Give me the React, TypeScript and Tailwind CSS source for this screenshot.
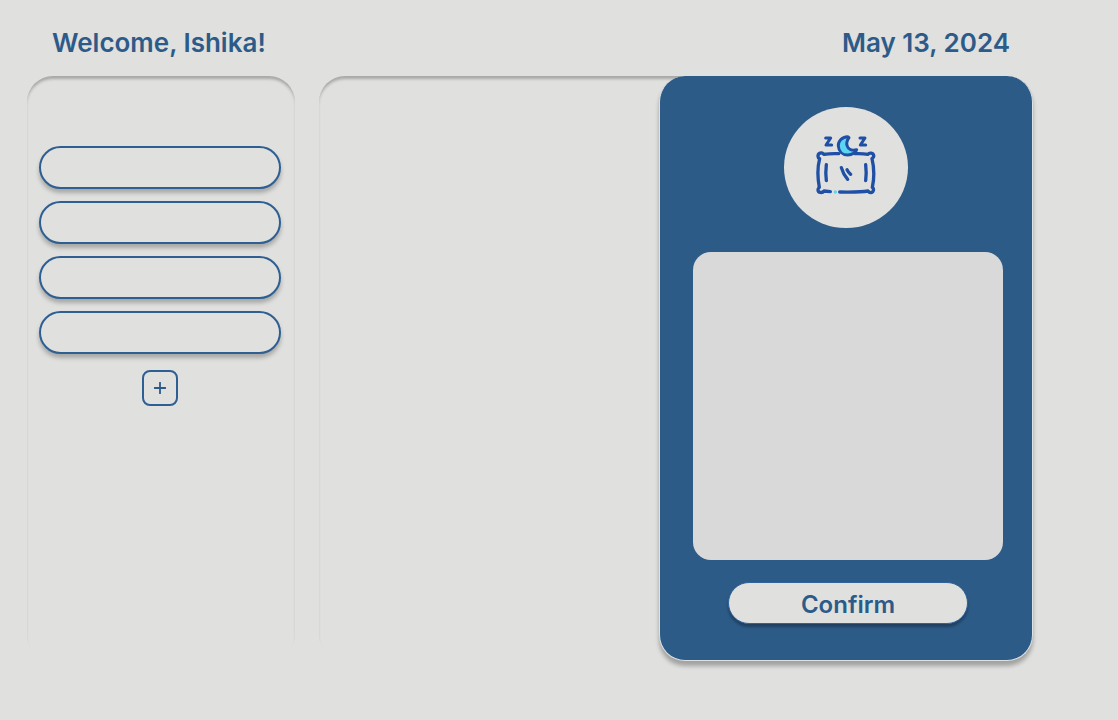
import React from "react";

const habits = ["Habit 1", "Habit 2", "Habit 3", "Habit 4"];

function SleepIcon() {
  return (
    <svg
      className="h-[61px] w-[62px]"
      viewBox="45 42 186 183"
      fill="none"
      stroke="#1f50a6"
      strokeWidth="10"
      strokeLinecap="round"
      strokeLinejoin="round"
      aria-hidden="true"
    >
      <path d="M91 215 L72 213 C67 220 54 219 54 209 C54 205 57 204 58 202 C52 170 52 142 59 116 C51 112 53 100 62 99 C67 98 69 101 72 103 Q90 100 116 101" />
      <path d="M165 101 Q187 100 204 103 C208 97 220 98 221 107 C222 112 219 114 216 116 C223 145 223 174 217 202 C223 206 221 217 212 218 C208 218 206 216 204 213 Q182 217 119 216" />
      <path d="M79 134 Q76 158 79 182 M197 134 Q200 158 197 182" />
      <path d="M124 143 Q130 164 143 178 M141 149 Q145 158 152 163" />
      <path
        d="M143 50 C125 51 114 64 115 78 C116 94 127 105 143 105 C157 105 168 97 170 89 C155 93 144 87 141 76 C138 66 142 60 147 53 Z"
        fill="#5cd5f2"
        strokeWidth="9"
      />
      <path d="M77 54 H92 L78 75 H95 M180 54 H195 L181 75 H197" strokeWidth="9" />
      <circle cx="106" cy="216" r="5" fill="#5cd5f2" stroke="none" />
    </svg>
  );
}

export default function App() {
  return (
    <div className="min-h-screen bg-[#e0e0de] pr-[85px] pb-15 pl-[27px] font-['Inter',sans-serif] text-[#2d5b89]">
      <header className="flex h-19 items-center justify-between pt-2.5 pr-[23px] pl-[25px] text-[26px] leading-8 font-semibold">
        <h1>Welcome, Ishika!</h1>
        <time dateTime="2024-05-13">May 13, 2024</time>
      </header>

      <main className="flex gap-6">
        <aside className="flex w-[268px] shrink-0 flex-col items-center rounded-[26px] pt-[70px] pr-0.5 shadow-[inset_0_4px_3px_-1px_rgba(0,0,0,0.25)]">
          <div className="flex flex-col gap-3">
            {habits.map((name) => (
              <input
                key={name}
                type="text"
                aria-label={name}
                className="h-[43px] w-[242px] rounded-full border-2 border-[#2d5f93] bg-[#e0e0de] px-5 shadow-[0_4px_4px_rgba(0,0,0,0.25)] outline-none"
              />
            ))}
          </div>
          <button
            type="button"
            aria-label="Add habit"
            className="mt-4 flex size-9 items-center justify-center rounded-lg border-2 border-[#2d5f93]"
          >
            <svg className="size-3" viewBox="0 0 12 12" stroke="currentColor" strokeWidth="1.8" strokeLinecap="round" aria-hidden="true">
              <path d="M6 0.5 V11.5 M0.5 6 H11.5" />
            </svg>
          </button>
        </aside>

        <section className="flex flex-1 justify-end rounded-[26px] shadow-[inset_0_4px_3px_-1px_rgba(0,0,0,0.25)]">
          <form
            className="flex w-[374px] flex-col items-center rounded-[26px] border border-t-0 border-[#dde1e3] bg-[#2d5b88] pt-[31px] pb-9 shadow-[0_5px_4px_rgba(0,0,0,0.28)]"
            onSubmit={(event) => event.preventDefault()}
          >
            <div className="flex h-[121px] w-[124px] items-center justify-center rounded-[50%] bg-[#e0e0de] pb-1.5">
              <SleepIcon />
            </div>
            <div className="mt-6 flex w-full flex-col items-center pr-[29px] pl-[33px]">
              <textarea
                aria-label="Sleep notes"
                className="h-[308px] w-full resize-none rounded-[18px] bg-[#d9d9d9] p-5 outline-none"
              />
              <button
                type="submit"
                className="mt-[22px] h-[42px] w-60 rounded-full border border-[#2f639a] bg-[#e0e0de] pt-1 text-[24px] leading-8 font-semibold shadow-[0_3px_3px_rgba(0,0,0,0.3)]"
              >
                Confirm
              </button>
            </div>
          </form>
        </section>
      </main>
    </div>
  );
}
